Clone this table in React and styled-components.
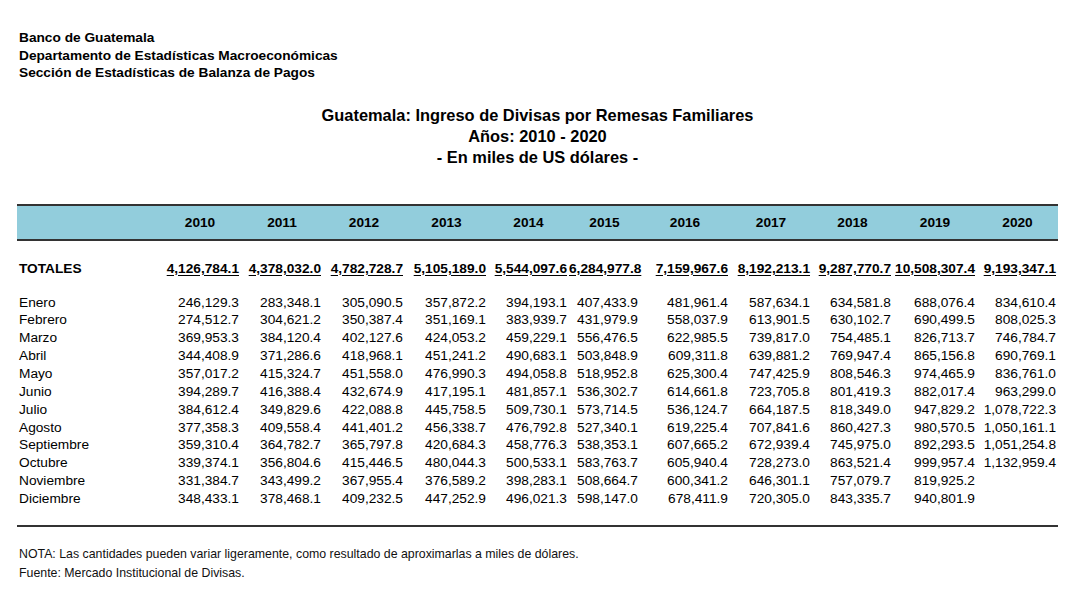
import React from "react";
import styled, { createGlobalStyle } from "styled-components";

const GlobalStyle = createGlobalStyle`
  html, body { margin: 0; padding: 0; background: #ffffff; }
  body { font-family: "Liberation Sans", Arial, sans-serif; color: #000; }
`;

const COLS = "142px 82px 82px 82px 83px 81px 71px 90px 82px 81px 84px 81px";

const Page = styled.div`
  width: 1080px;
  padding: 29px 0 0 17px;
  box-sizing: border-box;
`;

const OrgHeader = styled.div`
  padding-left: 2px;
  font-weight: bold;
  font-size: 13.7px;
  line-height: 17.7px;
`;

const Title = styled.div`
  width: 1041px;
  margin-top: 22.5px;
  text-align: center;
  font-weight: bold;
  font-size: 16.4px;
  line-height: 21px;
`;

const Table = styled.div`
  width: 1041px;
  margin-top: 36px;
`;

const HeaderBand = styled.div`
  display: grid;
  grid-template-columns: ${COLS};
  height: 33px;
  align-items: center;
  background: #92cddc;
  border-top: 2px solid #333;
  border-bottom: 2px solid #333;
`;

const HeadCell = styled.div`
  text-align: center;
  font-weight: bold;
  font-size: 13.7px;
`;

const Row = styled.div`
  display: grid;
  grid-template-columns: ${COLS};
  height: ${(p) => p.$h || "17.85px"};
  line-height: ${(p) => p.$h || "17.85px"};
  margin-top: ${(p) => p.$mt || "0"};
  margin-bottom: ${(p) => p.$mb || "0"};
  font-size: 13.7px;
  font-weight: ${(p) => (p.$bold ? "bold" : "normal")};
  white-space: nowrap;
`;

const LabelCell = styled.div`
  padding-left: 2px;
`;

const NumCell = styled.div`
  text-align: right;
  padding-right: 2px;
  text-decoration: ${(p) => (p.$underline ? "underline" : "none")};
  text-underline-offset: 2px;
`;

const BottomRule = styled.div`
  width: 1041px;
  height: 2px;
  background: #333;
  margin-top: 17px;
`;

const Notes = styled.div`
  margin-top: 18px;
  padding-left: 2px;
  font-size: 12.35px;
  line-height: 19px;
  color: #111;
`;

const years = ["2010","2011","2012","2013","2014","2015","2016","2017","2018","2019","2020"];

const totals = ["4,126,784.1","4,378,032.0","4,782,728.7","5,105,189.0","5,544,097.6","6,284,977.8","7,159,967.6","8,192,213.1","9,287,770.7","10,508,307.4","9,193,347.1"];

const months = [
  ["Enero", ["246,129.3","283,348.1","305,090.5","357,872.2","394,193.1","407,433.9","481,961.4","587,634.1","634,581.8","688,076.4","834,610.4"]],
  ["Febrero", ["274,512.7","304,621.2","350,387.4","351,169.1","383,939.7","431,979.9","558,037.9","613,901.5","630,102.7","690,499.5","808,025.3"]],
  ["Marzo", ["369,953.3","384,120.4","402,127.6","424,053.2","459,229.1","556,476.5","622,985.5","739,817.0","754,485.1","826,713.7","746,784.7"]],
  ["Abril", ["344,408.9","371,286.6","418,968.1","451,241.2","490,683.1","503,848.9","609,311.8","639,881.2","769,947.4","865,156.8","690,769.1"]],
  ["Mayo", ["357,017.2","415,324.7","451,558.0","476,990.3","494,058.8","518,952.8","625,300.4","747,425.9","808,546.3","974,465.9","836,761.0"]],
  ["Junio", ["394,289.7","416,388.4","432,674.9","417,195.1","481,857.1","536,302.7","614,661.8","723,705.8","801,419.3","882,017.4","963,299.0"]],
  ["Julio", ["384,612.4","349,829.6","422,088.8","445,758.5","509,730.1","573,714.5","536,124.7","664,187.5","818,349.0","947,829.2","1,078,722.3"]],
  ["Agosto", ["377,358.3","409,558.4","441,401.2","456,338.7","476,792.8","527,340.1","619,225.4","707,841.6","860,427.3","980,570.5","1,050,161.1"]],
  ["Septiembre", ["359,310.4","364,782.7","365,797.8","420,684.3","458,776.3","538,353.1","607,665.2","672,939.4","745,975.0","892,293.5","1,051,254.8"]],
  ["Octubre", ["339,374.1","356,804.6","415,446.5","480,044.3","500,533.1","583,763.7","605,940.4","728,273.0","863,521.4","999,957.4","1,132,959.4"]],
  ["Noviembre", ["331,384.7","343,499.2","367,955.4","376,589.2","398,283.1","508,664.7","600,341.2","646,301.1","757,079.7","819,925.2",""]],
  ["Diciembre", ["348,433.1","378,468.1","409,232.5","447,252.9","496,021.3","598,147.0","678,411.9","720,305.0","843,335.7","940,801.9",""]],
];

export default function App() {
  return (
    <>
      <GlobalStyle />
      <Page>
        <OrgHeader>
          <div>Banco de Guatemala</div>
          <div>Departamento de Estadísticas Macroeconómicas</div>
          <div>Sección de Estadísticas de Balanza de Pagos</div>
        </OrgHeader>
        <Title>
          <div>Guatemala: Ingreso de Divisas por Remesas Familiares</div>
          <div>Años: 2010 - 2020</div>
          <div>- En miles de US dólares -</div>
        </Title>
        <Table>
          <HeaderBand>
            <HeadCell />
            {years.map((y) => (
              <HeadCell key={y}>{y}</HeadCell>
            ))}
          </HeaderBand>
          <Row $bold $h="18px" $mt="19px" $mb="16px">
            <LabelCell>TOTALES</LabelCell>
            {totals.map((t, i) => (
              <NumCell key={i} $underline>{t}</NumCell>
            ))}
          </Row>
          {months.map(([m, vals]) => (
            <Row key={m}>
              <LabelCell>{m}</LabelCell>
              {vals.map((v, i) => (
                <NumCell key={i}>{v}</NumCell>
              ))}
            </Row>
          ))}
          <BottomRule />
        </Table>
        <Notes>
          <div>NOTA: Las cantidades pueden variar ligeramente, como resultado de aproximarlas a miles de dólares.</div>
          <div>Fuente: Mercado Institucional de Divisas.</div>
        </Notes>
      </Page>
    </>
  );
}
